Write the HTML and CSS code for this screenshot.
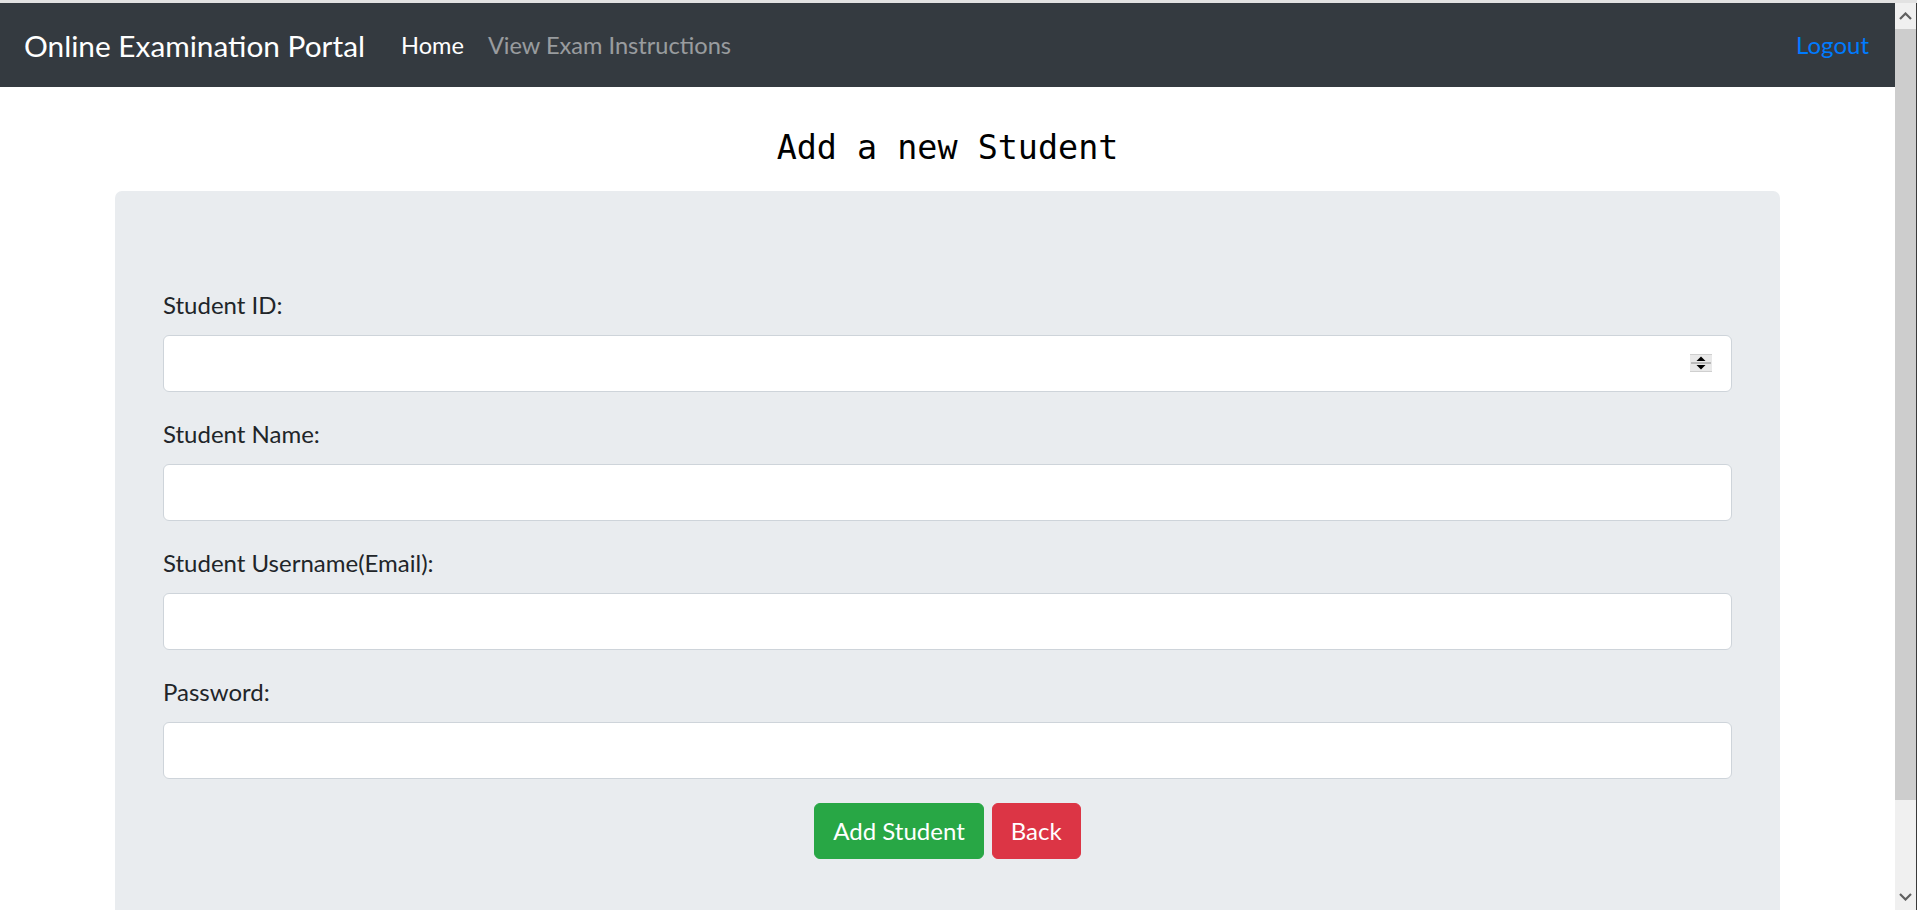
FILE: index.html
```html
<!DOCTYPE html>
<html lang="en">
<head>
<meta charset="utf-8">
<title>Add Student</title>
<link rel="stylesheet" href="styles.css">
</head>
<body>
<div class="window">
  <div class="topline"></div>
  <div class="viewport">
    <div class="page">
      <nav class="navbar">
        <a class="brand" href="#">Online Examination Portal</a>
        <ul class="nav">
          <li><a class="nav-link active" href="#">Home</a></li>
          <li><a class="nav-link" href="#">View Exam Instructions</a></li>
        </ul>
        <a class="logout" href="#">Logout</a>
      </nav>
      <main class="container">
        <h4 class="title">Add a new Student</h4>
        <div class="jumbotron">
          <form class="form">
            <div class="form-group">
              <label class="label" for="sid">Student ID:</label>
              <div class="input-wrap">
                <input class="input" id="sid" type="text">
                <svg class="spinner" width="22" height="18" viewBox="0 0 22 18">
                  <rect x="0" y="0" width="22" height="18" fill="#e9e9e9"/>
                  <line x1="0" y1="0.5" x2="22" y2="0.5" stroke="#cfcfcf"/>
                  <line x1="0" y1="17.5" x2="22" y2="17.5" stroke="#cfcfcf"/>
                  <line x1="1" y1="9" x2="21" y2="9" stroke="#8a8a8a"/>
                  <polygon points="6.5,7 15.5,7 11,2.5" fill="#000"/>
                  <polygon points="6.5,11 15.5,11 11,15.5" fill="#000"/>
                </svg>
              </div>
            </div>
            <div class="form-group">
              <label class="label" for="sname">Student Name:</label>
              <input class="input" id="sname" type="text">
            </div>
            <div class="form-group">
              <label class="label" for="semail">Student Username(Email):</label>
              <input class="input" id="semail" type="text">
            </div>
            <div class="form-group">
              <label class="label" for="spass">Password:</label>
              <input class="input" id="spass" type="password">
            </div>
            <div class="actions">
              <button type="button" class="btn btn-success">Add Student</button>
              <button type="button" class="btn btn-danger">Back</button>
            </div>
          </form>
        </div>
      </main>
    </div>
    <div class="scrollbar">
      <div class="sb-btn">
        <svg width="13" height="8" viewBox="0 0 13 8"><polyline points="1,7 6.5,1.5 12,7" fill="none" stroke="#606060" stroke-width="2.2"/></svg>
      </div>
      <div class="sb-thumb"></div>
      <div class="sb-track"></div>
      <div class="sb-btn">
        <svg width="13" height="8" viewBox="0 0 13 8"><polyline points="1,1 6.5,6.5 12,1" fill="none" stroke="#606060" stroke-width="2.2"/></svg>
      </div>
    </div>
    <div class="edge"></div>
  </div>
</div>
</body>
</html>
```
FILE: styles.css
```css
* { box-sizing: border-box; }

html, body {
  margin: 0;
  height: 910px;
  overflow: hidden;
}

body {
  font-family: Lato, "Open Sans", sans-serif;
  font-size: 24px;
  line-height: 36px;
  color: #212529;
  background: #fff;
}

.window {
  display: flex;
  flex-direction: column;
  height: 910px;
}

.topline {
  height: 3px;
  background: #e2e2e2;
  flex: none;
}

.viewport {
  display: flex;
  flex: 1;
  min-height: 0;
}

.page {
  flex: 1;
  min-width: 0;
  overflow: hidden;
}

/* navbar */
.navbar {
  height: 84px;
  background: #343a40;
  display: flex;
  align-items: center;
  padding: 12px 24px;
}

.brand {
  font-size: 29.8px;
  line-height: 45px;
  padding: 7.5px 0;
  margin-right: 24px;
  color: #fff;
  text-decoration: none;
}

.nav {
  display: flex;
  list-style: none;
  margin: 0;
  padding: 0;
}

.nav-link {
  display: block;
  padding: 12px;
  font-size: 23.6px;
  color: rgba(255, 255, 255, 0.5);
  text-decoration: none;
}

.nav-link.active {
  color: #fff;
}

.logout {
  margin-left: auto;
  padding: 12px 2px 12px 12px;
  color: #007bff;
  text-decoration: none;
}

/* content */
.container {
  width: 1665px;
  margin: 0 auto;
}

.title {
  margin: 39px 0 22px;
  font-family: "DejaVu Sans Mono", "Liberation Mono", monospace;
  font-size: 33.4px;
  line-height: 43px;
  font-weight: normal;
  color: #000;
  text-align: center;
}

.jumbotron {
  background: #e9ecef;
  border-radius: 7px;
  padding: 96px 48px;
  min-height: 760px;
}

.form-group {
  margin-bottom: 24px;
}

.label {
  display: block;
  margin-bottom: 12px;
}

.input-wrap {
  position: relative;
}

.input {
  display: block;
  width: 100%;
  height: 57px;
  padding: 9px 18px;
  font: inherit;
  color: #495057;
  background: #fff;
  border: 1px solid #ced4da;
  border-radius: 6px;
  outline: none;
}

.spinner {
  position: absolute;
  right: 20px;
  top: 19px;
}

.actions {
  display: flex;
  justify-content: center;
  gap: 8px;
}

.btn {
  font: inherit;
  line-height: 36px;
  padding: 9px 18px;
  border: 1px solid transparent;
  border-radius: 6px;
  color: #fff;
  cursor: pointer;
}

.btn-success {
  background: #28a745;
  border-color: #28a745;
}

.btn-danger {
  background: #dc3545;
  border-color: #dc3545;
}

/* fake scrollbar */
.scrollbar {
  width: 21px;
  flex: none;
  display: flex;
  flex-direction: column;
  background: #f0f0f0;
}

.sb-btn {
  height: 26px;
  flex: none;
  display: flex;
  align-items: center;
  justify-content: center;
}

.sb-thumb {
  height: 771px;
  flex: none;
  background: #cdcdcd;
}

.sb-track {
  flex: 1;
}

.edge {
  width: 1px;
  flex: none;
  background: #3a3a3a;
}
```
